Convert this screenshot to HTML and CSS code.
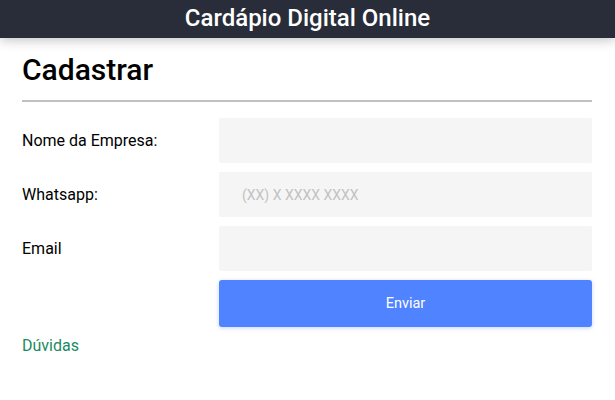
FILE: index.html
```html
<!DOCTYPE html>
<html>
<head>
    <title>Cardápio Digital Online</title>
    <link rel="stylesheet" href="styles.css">
</head>
<body>
    <header class="topbar">
        <h1>Cardápio Digital Online</h1>
    </header>

    <main class="container">
        <h2 class="page-title">Cadastrar</h2>
        <hr class="divider">

        <form class="signup-form">
            <label for="empresa">Nome da Empresa:</label>
            <input type="text" id="empresa" class="field">

            <label for="whatsapp">Whatsapp:</label>
            <input type="text" id="whatsapp" class="field" placeholder="(XX) X XXXX XXXX">

            <label for="email">Email</label>
            <input type="email" id="email" class="field">

            <span></span>
            <button type="button" class="button">Enviar</button>
        </form>

        <a href="#" class="help-link">Dúvidas</a>
    </main>
</body>
</html>
```

FILE: styles.css
```css
body {
    margin: 0;
    font-family: Roboto, 'Liberation Sans', sans-serif;
    color: #000;
    background: #fff;
}

.topbar {
    height: 38px;
    background-color: #282d39;
    box-shadow: 0 2px 12px rgba(0, 0, 0, 0.25);
    display: flex;
    align-items: center;
    justify-content: center;
}

.topbar h1 {
    margin: 0 0 2px;
    color: #fff;
    font-size: 24px;
    font-weight: 500;
}

.container {
    padding: 0 23px 0 22px;
}

.page-title {
    margin: 14px 0 0;
    font-size: 30px;
    font-weight: 500;
    line-height: 36px;
}

.divider {
    margin: 12px 0 16px;
    border: none;
    height: 2px;
    background-color: #c0c0c0;
}

.signup-form {
    display: grid;
    grid-template-columns: 197px 1fr;
    row-gap: 9px;
    align-items: center;
}

.signup-form label {
    font-size: 16px;
}

.field {
    height: 45px;
    box-sizing: border-box;
    border: none;
    border-radius: 2px;
    background-color: #f5f5f5;
    padding: 0 23px;
    font-family: inherit;
    font-size: 14px;
    outline: none;
}

.field::placeholder {
    color: #c2c2c2;
}

.button {
    height: 47px;
    border: none;
    border-radius: 3px;
    background-color: #4f83ff;
    color: #fff;
    font-family: inherit;
    font-size: 14.5px;
    box-shadow: 0 1px 4px rgba(79, 131, 255, 0.35);
    cursor: pointer;
}

.help-link {
    display: inline-block;
    margin-top: 9px;
    color: #1a8a62;
    font-size: 16px;
    text-decoration: none;
}
```
